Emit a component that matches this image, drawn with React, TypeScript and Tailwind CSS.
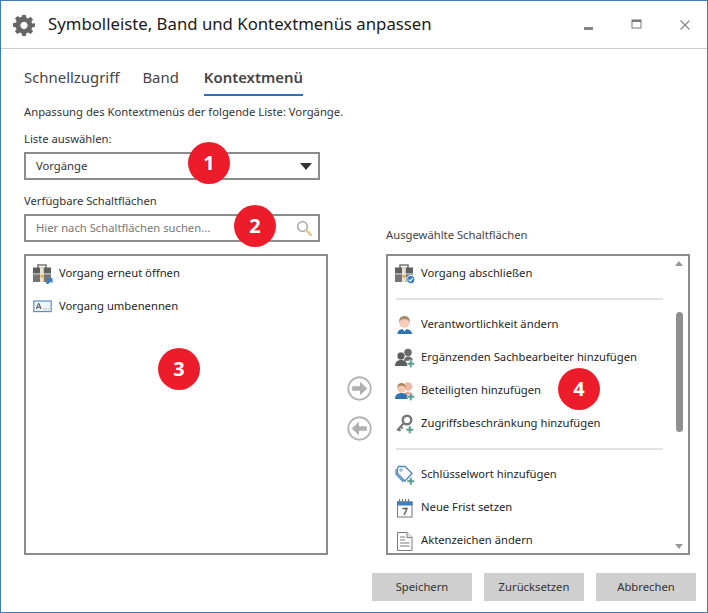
import React from "react";

const Plus = ({ x = 13, y = 13 }: { x?: number; y?: number }) => (
  <path d={`M${x + 2} ${y}h2.6v2.4H${x + 7}v2.6h-2.4v2.4H${x + 2}V${y + 5}H${x - 0.4}V${y + 2.4}H${x + 2}z`} fill="#5f9e92" stroke="#fff" strokeWidth="0.5" />
);

const Case = ({ badge }: { badge: "check" | "arrow" }) => (
  <svg width="20" height="20" viewBox="0 0 20 20">
    <path d="M5 4V1h8v3" fill="none" stroke="#777" strokeWidth="1.6" />
    <rect x="0" y="3.500" width="18" height="6" fill="#5f5f5f" />
    <rect x="0" y="10.300" width="18" height="7.700" fill="#757575" />
    <rect x="7" y="3.500" width="3.800" height="14.500" fill="#e9e2cf" />
    <rect x="7.600" y="11" width="2.600" height="2.600" fill="#d8a84a" />
    {badge === "check" ? (
      <>
        <circle cx="15.800" cy="15.600" r="4.200" fill="#3a7fc4" stroke="#fff" />
        <path d="M13.700 15.600l1.600 1.600 2.600-3" fill="none" stroke="#fff" strokeWidth="1.200" />
      </>
    ) : (
      <path d="M12.500 19l3.200-3.200-1.700-1.700H19.500V19.500l-1.700-1.700-3 2.600z" fill="#3a7fc4" />
    )}
  </svg>
);

const Rename = () => (
  <svg width="20" height="20" viewBox="0 0 20 20">
    <rect x="0.800" y="4" width="17.400" height="10.600" fill="#eef4fa" stroke="#5b8fc4" strokeWidth="1.200" />
    <path d="M3.400 12L5.400 6.500h.6L8 12M4.200 10.200h3" fill="none" stroke="#4a4a4a" strokeWidth="1" />
    <path d="M10.500 12h.9M12.700 12h.9M14.900 12h.9" stroke="#777" strokeWidth="1" />
  </svg>
);

const Person = () => (
  <svg width="20" height="20" viewBox="0 0 20 20">
    <path d="M2.500 19c0-3.500 2.500-5 7-5s7.500 1.500 7.500 5z" fill="#2f73b4" />
    <path d="M7.500 14l2 2.500 2-2.500z" fill="#fff" />
    <circle cx="9.500" cy="7.500" r="5.300" fill="#f4cdb8" />
    <path d="M4.200 7.500c-.6-4.500 2.200-6.500 5.300-6.500s5.900 2 5.300 6.500c-1-2.800-2.800-3.300-5.300-3.300s-4.300.5-5.300 3.300z" fill="#a98a66" />
  </svg>
);

const Group = () => (
  <svg width="20" height="20" viewBox="0 0 20 20">
    <circle cx="13" cy="4.500" r="3.800" fill="#6b6b6b" />
    <path d="M9 13c0-3 2-4.500 4-4.500s5 1.500 5 4z" fill="#6b6b6b" />
    <circle cx="6" cy="8" r="4" fill="#5d5d5d" stroke="#fff" strokeWidth="0.600" />
    <path d="M0 18c0-4 2.500-6 6-6s6.500 2 6.500 6z" fill="#5d5d5d" />
    <Plus x={12.500} y={12} />
  </svg>
);

const Participants = () => (
  <svg width="20" height="20" viewBox="0 0 20 20">
    <circle cx="13" cy="5.500" r="4.300" fill="#f0b6a8" />
    <path d="M9 15c0-3 2-4.500 4-4.500s5 1.500 5 4z" fill="#e7a99c" />
    <circle cx="6.500" cy="7.500" r="4.200" fill="#f3c7b0" />
    <path d="M2.300 7c-.2-3.500 2-5 4.200-5s4.400 1.500 4.200 5c-1-1.800-2.200-2.300-4.200-2.300s-3.200.5-4.200 2.300z" fill="#a58763" />
    <path d="M0 18c0-4 2.500-6 6.500-6s6.500 2 6.500 6z" fill="#2f73b4" />
    <Plus x={12.500} y={12} />
  </svg>
);

const KeyIcon = () => (
  <svg width="20" height="20" viewBox="0 0 20 20">
    <circle cx="12" cy="6" r="4.300" fill="none" stroke="#777" strokeWidth="2.400" />
    <path d="M9 9L2 16.500M3.500 15l2 2M5.800 12.800l1.800 1.800" fill="none" stroke="#777" strokeWidth="2" />
    <Plus x={11.500} y={12} />
  </svg>
);

const Tag = () => (
  <svg width="20" height="20" viewBox="0 0 20 20">
    <path d="M3.500 1.500h6.500l7 7-7 7.500-7.500-7.500V3z" fill="#fff" stroke="#4a86c2" strokeWidth="1.300" />
    <path d="M1 4v5l7.500 8" fill="none" stroke="#4a86c2" strokeWidth="1.300" />
    <circle cx="6" cy="5" r="1.200" fill="#fff" stroke="#4a86c2" strokeWidth="0.800" />
    <Plus x={12.500} y={12.500} />
  </svg>
);

const Calendar = () => (
  <svg width="20" height="20" viewBox="0 0 20 20">
    <rect x="2.500" y="4" width="14.500" height="15" fill="#fff" stroke="#777" />
    <rect x="2" y="3.500" width="15.500" height="4" fill="#3a7fc4" />
    <path d="M4.500 1v3.500M7.500 1v3.500M10.500 1v3.500M13.500 1v3.500" stroke="#777" strokeWidth="1.200" />
    <path d="M7.500 10.500h4.500L9 17" fill="none" stroke="#555" strokeWidth="1.300" />
  </svg>
);

const Doc = () => (
  <svg width="20" height="20" viewBox="0 0 20 20">
    <path d="M2.500 1.500H12l5 5v13H2.500z" fill="#fff" stroke="#7a7a7a" />
    <path d="M12 1.500v5h5" fill="#eee" stroke="#7a7a7a" />
    <path d="M5 6h5M5 9h5M5 12h9.500M5 15h9.500" stroke="#7a7a7a" />
  </svg>
);

const GearIcon = () => (
  <svg width="22" height="22" viewBox="0 0 24 24">
    <path
      fill="#666"
      fillRule="evenodd"
      d="M10 1h4l.6 3.100 1.900.8 2.600-1.800 2.800 2.800-1.800 2.600.8 1.900L24 10v4l-3.100.6-.8 1.900 1.800 2.600-2.800 2.800-2.600-1.800-1.900.8L14 24h-4l-.6-3.100-1.900-.8-2.600 1.800-2.800-2.800 1.800-2.600-.8-1.900L0 14v-4l3.100-.6.800-1.900L2.100 4.900l2.800-2.800 2.600 1.800 1.900-.8zM12 8.500a4 4 0 1 0 .01 0z"
    />
  </svg>
);

const CircleArrow = ({ left }: { left?: boolean }) => (
  <svg width="25" height="25" viewBox="0 0 24 24" className={left ? "-scale-x-100" : ""}>
    <circle cx="12" cy="12" r="10.800" fill="#fff" stroke="#b4b4b4" strokeWidth="1.700" />
    <path d="M5 9.800h7.500V5.500l7 6.500-7 6.500v-4.300H5z" fill="#b0b0b0" />
  </svg>
);

const Badge = ({ n, className }: { n: number; className: string }) => (
  <div className={`absolute w-[42px] h-[42px] rounded-full bg-[#ed1c2b] text-white font-bold text-[20px] flex items-center justify-center ${className}`}>
    {n}
  </div>
);

const Row = ({ icon, label }: { icon: React.ReactNode; label: string }) => (
  <div className="flex items-center h-[33px] shrink-0">
    <span className="w-[20px] h-[20px] mr-[6px] flex items-center justify-center">{icon}</span>
    <span className="text-[11.250px] text-[#1f1f1f] whitespace-nowrap">{label}</span>
  </div>
);

const Sep = () => <div className="h-[2px] bg-[#e2e2e2] w-[267px] ml-[1px] my-[8px] shrink-0" />;

const Btn = ({ label }: { label: string }) => (
  <div className="w-[100px] h-[28px] bg-[#cfcfcf] flex items-center justify-center text-[11.250px] text-[#333]">{label}</div>
);

export default function App() {
  return (
    <div
      className="relative w-[708px] h-[613px] bg-white border border-[#3f7cb8] flex flex-col overflow-hidden"
      style={{ fontFamily: '"Noto Sans", "Open Sans", sans-serif' }}
    >
      <div className="h-[48px] shrink-0 border-b border-[#cccccc] flex items-center pl-[12px] pr-[16px]">
        <GearIcon />
        <span className="ml-[13px] text-[16.750px] text-[#1a1a1a] leading-none">Symbolleiste, Band und Kontextmenüs anpassen</span>
        <div className="ml-auto flex items-center gap-[37px]">
          <svg width="11" height="11" viewBox="0 0 11 11" className="mt-[3px]"><rect x="1" y="6" width="9" height="3" fill="#858585" /></svg>
          <svg width="11" height="11" viewBox="0 0 11 11"><rect x="1" y="1" width="9" height="8" fill="#fff" stroke="#777" /><rect x="1" y="1" width="9" height="2" fill="#777" /></svg>
          <svg width="12" height="12" viewBox="0 0 12 12"><path d="M1.500 1.500l9 9M10.500 1.500l-9 9" stroke="#8a8a8a" strokeWidth="1.300" /></svg>
        </div>
      </div>

      <div className="flex-1 flex flex-col pl-[23px] pr-[17px] min-h-0">
        <div className="flex gap-[23px] mt-[18px] text-[14.900px] text-[#444] leading-none">
          <span className="h-[29px] pt-[3px]">Schnellzugriff</span>
          <span className="h-[29px] pt-[3px]">Band</span>
          <span className="h-[29px] pt-[3px] ml-[2px] font-semibold border-b-[2px] border-[#2b73c0]">Kontextmenü</span>
        </div>

        <div className="mt-[8px] text-[11.250px] leading-[16px] text-[#333]">Anpassung des Kontextmenüs der folgende Liste: Vorgänge.</div>

        <div className="flex items-end">
          <div className="w-[304px]">
            <div className="mt-[11px] text-[11.250px] leading-[16px] text-[#333]">Liste auswählen:</div>
            <div className="mt-[5px] w-[296px] h-[28px] border-[2px] border-[#8c8c8c] flex items-center pl-[10px] pr-[6px] text-[11.250px] text-[#333]">
              <span>Vorgänge</span>
              <span className="ml-auto w-0 h-0 border-l-[6px] border-r-[6px] border-t-[7px] border-l-transparent border-r-transparent border-t-[#333]" />
            </div>
            <div className="mt-[13px] text-[11.250px] leading-[16px] text-[#333]">Verfügbare Schaltflächen</div>
            <div className="mt-[5px] w-[296px] h-[28px] border-[2px] border-[#8c8c8c] flex items-center pl-[10px] pr-[5px] text-[11.250px] text-[#777]">
              <span>Hier nach Schaltflächen suchen...</span>
              <svg width="17" height="17" viewBox="0 0 17 17" className="ml-auto">
                <circle cx="6.500" cy="6.500" r="4.800" fill="#fff" stroke="#9a9a9a" strokeWidth="1.300" />
                <path d="M10 10l5 5" stroke="#e6c785" strokeWidth="2.400" strokeLinecap="round" />
              </svg>
            </div>
          </div>
          <div className="ml-[58px] mb-[-1px] text-[11.250px] leading-[16px] text-[#444]">Ausgewählte Schaltflächen</div>
        </div>

        <div className="mt-[12px] flex">
          <div className="w-[304px] h-[301px] border-[2px] border-[#8c8c8c] pl-[7px] pt-[1px] flex flex-col">
            <Row icon={<Case badge="arrow" />} label="Vorgang erneut öffnen" />
            <Row icon={<Rename />} label="Vorgang umbenennen" />
          </div>
          <div className="w-[58px] flex flex-col items-center pt-[122px] gap-[15px] pl-[5px]">
            <CircleArrow />
            <CircleArrow left />
          </div>
          <div className="relative w-[304px] h-[301px] border-[2px] border-[#8c8c8c] pl-[7px] pt-[1px] flex flex-col overflow-hidden">
            <Row icon={<Case badge="check" />} label="Vorgang abschließen" />
            <Sep />
            <Row icon={<Person />} label="Verantwortlichkeit ändern" />
            <Row icon={<Group />} label="Ergänzenden Sachbearbeiter hinzufügen" />
            <Row icon={<Participants />} label="Beteiligten hinzufügen" />
            <Row icon={<KeyIcon />} label="Zugriffsbeschränkung hinzufügen" />
            <Sep />
            <Row icon={<Tag />} label="Schlüsselwort hinzufügen" />
            <Row icon={<Calendar />} label="Neue Frist setzen" />
            <Row icon={<Doc />} label="Aktenzeichen ändern" />
            <div className="absolute right-[3px] top-0 bottom-0 w-[12px] flex flex-col items-center">
              <span className="mt-[5px] w-0 h-0 border-l-[4px] border-r-[4px] border-b-[5px] border-l-transparent border-r-transparent border-b-[#999]" />
              <span className="mt-[46px] w-[7px] h-[120px] rounded-full bg-[#8f8f8f]" />
              <span className="mt-auto mb-[4px] w-0 h-0 border-l-[4px] border-r-[4px] border-t-[5px] border-l-transparent border-r-transparent border-t-[#999]" />
            </div>
          </div>
        </div>

        <div className="mt-[18px] flex justify-end gap-[12px] mr-[-6px]">
          <Btn label="Speichern" />
          <Btn label="Zurücksetzen" />
          <Btn label="Abbrechen" />
        </div>
      </div>

      <Badge n={1} className="left-[187px] top-[141px]" />
      <Badge n={2} className="left-[233px] top-[204px]" />
      <Badge n={3} className="left-[157px] top-[347px]" />
      <Badge n={4} className="left-[557px] top-[367px]" />
    </div>
  );
}
